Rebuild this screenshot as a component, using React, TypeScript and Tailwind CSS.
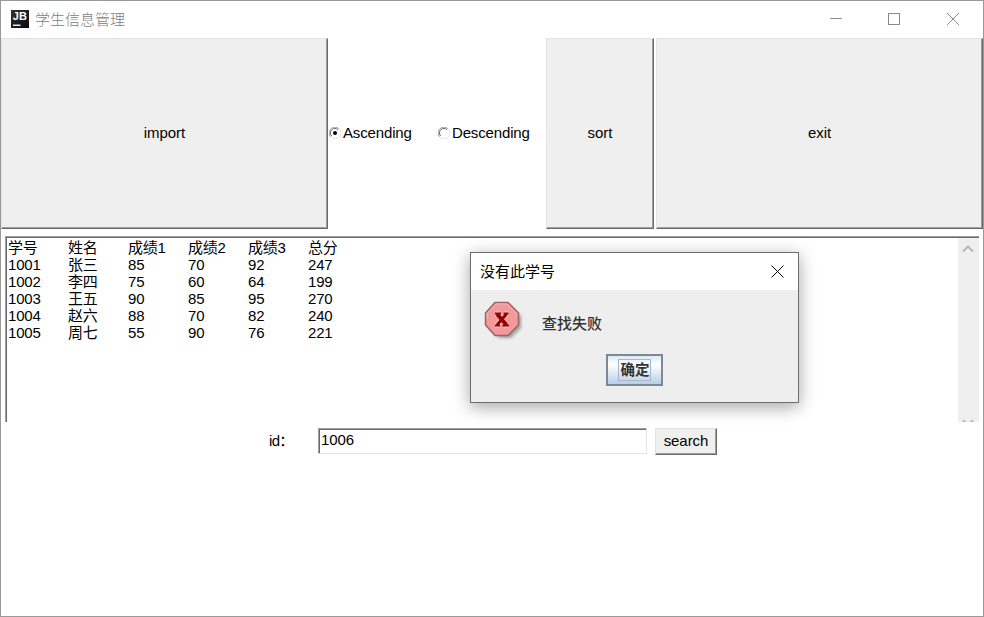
import type { ReactNode } from "react";

const rows: string[][] = [
  ["学号", "姓名", "成绩1", "成绩2", "成绩3", "总分"],
  ["1001", "张三", "85", "70", "92", "247"],
  ["1002", "李四", "75", "60", "64", "199"],
  ["1003", "王五", "90", "85", "95", "270"],
  ["1004", "赵六", "88", "70", "82", "240"],
  ["1005", "周七", "55", "90", "76", "221"],
];

function BevelButton({ className, children }: { className: string; children: ReactNode }) {
  return (
    <button
      className={`flex items-center justify-center border border-t-[#e3e3e3] border-l-[#e3e3e3] border-r-[#696969] border-b-[#696969] bg-[#efefef] tracking-[-0.05px] shadow-[inset_-1px_-1px_0_#a0a0a0] ${className}`}
    >
      {children}
    </button>
  );
}

function Radio({ checked = false, label, className }: { checked?: boolean; label: string; className: string }) {
  return (
    <label className={`flex items-center pl-px tracking-[-0.15px] ${className}`}>
      <svg width="12" height="12" viewBox="0 0 12 12" className="mr-[2px] -mt-[2px] shrink-0" fill="none">
        <path d="M1.8 9.8A5 5 0 0 1 9.8 1.8" stroke="#a0a0a0" />
        <path d="M2.7 9A4.2 4.2 0 0 1 9 2.7" stroke="#696969" />
        <path d="M10.2 2.2A5 5 0 0 1 2.2 10.2" stroke="#e3e3e3" />
        {checked && <circle cx="6" cy="6" r="2" fill="#000" />}
      </svg>
      {label}
    </label>
  );
}

function TitleBar() {
  return (
    <header className="flex h-[37px] shrink-0 items-center bg-white pl-[10px]">
      <svg width="18" height="18" viewBox="0 0 18 18" className="-mt-px">
        <defs>
          <linearGradient id="logo" x1="0" y1="0" x2="1" y2="1">
            <stop offset="0" stopColor="#30343a" />
            <stop offset="1" stopColor="#08090b" />
          </linearGradient>
        </defs>
        <rect width="18" height="18" fill="url(#logo)" />
        <text x="1.8" y="10.2" fontSize="11" fontWeight="700" fill="#fff" fontFamily="Liberation Sans, sans-serif" textLength="14" lengthAdjust="spacingAndGlyphs">JB</text>
        <rect x="2" y="14.5" width="7.500" height="1.500" fill="#e8e8e8" />
      </svg>
      <span className="ml-[6px] text-[15px] leading-[20px] font-light text-[#808080]">学生信息管理</span>
      <svg className="-mt-[2px] ml-auto mr-[23px]" width="131" height="14" viewBox="0 0 131 14" fill="none" stroke="#8a8a8a">
        <path d="M1 6.5H13" />
        <rect x="59.5" y="1.5" width="11" height="11" />
        <path d="M118 1L130 13M130 1L118 13" />
      </svg>
    </header>
  );
}

function ErrorIcon() {
  return (
    <svg width="40" height="42" viewBox="0 0 40 42" className="shrink-0">
      <defs>
        <filter id="soft" x="-20%" y="-20%" width="150%" height="150%">
          <feGaussianBlur stdDeviation="1.5" />
        </filter>
      </defs>
      <path d="M13 4H25L37 15V27L27 37H15L5 27V14Z" fill="#777" opacity=".65" filter="url(#soft)" />
      <path d="M11 1.5H24L34.5 12V24L24 34.5H11L1.500 24V12Z" fill="#f19a9c" stroke="#9c6264" strokeWidth="1.5" />
      <path d="M3 18V12.500L12 3H23L32.500 12.500" fill="none" stroke="#f6b4b5" />
      <g fill="none">
        <path d="M13 13L22.500 24M22.500 13L13 24M11 13H16M19.500 13H24.500M11 24H16M19.500 24H24.500" stroke="#fac6c8" strokeWidth="5" />
        <path d="M13 13L22.500 24" stroke="#920000" strokeWidth="4" />
        <path d="M22.500 13L13 24" stroke="#920000" strokeWidth="3" />
        <path d="M11 12.500H17M19.500 12.500H24.500M11 24.500H16M18.500 24.500H25" stroke="#920000" strokeWidth="2" />
      </g>
    </svg>
  );
}

function Dialog() {
  return (
    <section className="absolute left-[469px] top-[251px] flex h-[151px] w-[329px] flex-col border border-[#6c6c6c] bg-[#eee] shadow-[0_4px_16px_rgba(0,0,0,0.36)]">
      <header className="flex h-[37px] shrink-0 items-center justify-between bg-white pl-[9px] pr-[15px] text-[15px] leading-[20px]">
        <span>没有此学号</span>
        <svg width="13" height="13" viewBox="0 0 13 13" className="-mr-px -mt-px" fill="none" stroke="#000">
          <path d="M.5 .5L12.500 12.500M12.500 .5L.5 12.500" />
        </svg>
      </header>
      <div className="flex h-[63px] items-start pl-[13px] pt-[11px]">
        <ErrorIcon />
        <span className="ml-[18px] mt-[13px] text-[15px] leading-[20px] font-medium text-[#333]">查找失败</span>
      </div>
      <button className="ml-[135px] mt-px flex h-[32px] w-[57px] shrink-0 items-center justify-center border-2 border-[#7a8a99] bg-linear-to-b from-[#dce8f3] via-white via-30% to-[#b8cfe5] text-[14.5px] font-bold text-[#333]">
        <span className="flex h-[22px] w-[33px] items-center justify-center border border-[#a3b8cc] pl-px leading-[20px]">确定</span>
      </button>
    </section>
  );
}

export default function App() {
  return (
    <main className="relative flex h-[617px] w-[984px] flex-col overflow-hidden border border-[#999] bg-white font-['Liberation_Sans','Noto_Sans_CJK_SC',sans-serif] text-[15px] text-black">
      <TitleBar />
      <div className="flex h-[191px] shrink-0">
        <BevelButton className="w-[327px]">import</BevelButton>
        <Radio checked label="Ascending" className="w-[109px]" />
        <Radio label="Descending" className="w-[109px]" />
        <BevelButton className="w-[108px]">sort</BevelButton>
        <BevelButton className="ml-[2px] w-[327px]">exit</BevelButton>
      </div>
      <div className="ml-[4px] mt-[7px] flex h-[186px] w-[974px] shrink-0 overflow-hidden border-t border-l border-[#a0a0a0]">
        <div className="flex grow justify-between border-t border-l border-[#696969]">
          <div className="pl-px tracking-[-0.2px]">
            {rows.map((row) => (
              <div key={row[0]} className="flex h-[17px] leading-[19px]">
                {row.map((cell, i) => (
                  <span key={i} className="w-[60px] whitespace-nowrap">{cell}</span>
                ))}
              </div>
            ))}
          </div>
          <div className="flex w-[21px] flex-col items-center justify-between bg-[#efefef] pr-[2px] pt-[7px]">
            <svg width="12" height="8" viewBox="0 0 12 8" fill="none" stroke="#b8b8b8" strokeWidth="2">
              <path d="M1 6.500L6 1.500L11 6.500" />
            </svg>
            <svg width="12" height="2" viewBox="0 0 12 2" fill="none" stroke="#b8b8b8" strokeWidth="2">
              <path d="M1 0L6 5L11 0" />
            </svg>
          </div>
        </div>
      </div>
      <div className="mt-[6px] flex h-[27px] shrink-0 pl-[268px]">
        <span className="w-[49px] pt-[2px] leading-[22px] tracking-[-0.7px]">id：</span>
        <div className="h-[26px] w-[329px] border border-t-[#a0a0a0] border-l-[#a0a0a0] border-r-[#e3e3e3] border-b-[#e3e3e3] pl-[2px] pt-px text-[15px] leading-[20px] tracking-[-0.1px] shadow-[inset_1px_1px_0_#696969]">1006</div>
        <BevelButton className="ml-[8px] w-[62px]">search</BevelButton>
      </div>
      <Dialog />
    </main>
  );
}
